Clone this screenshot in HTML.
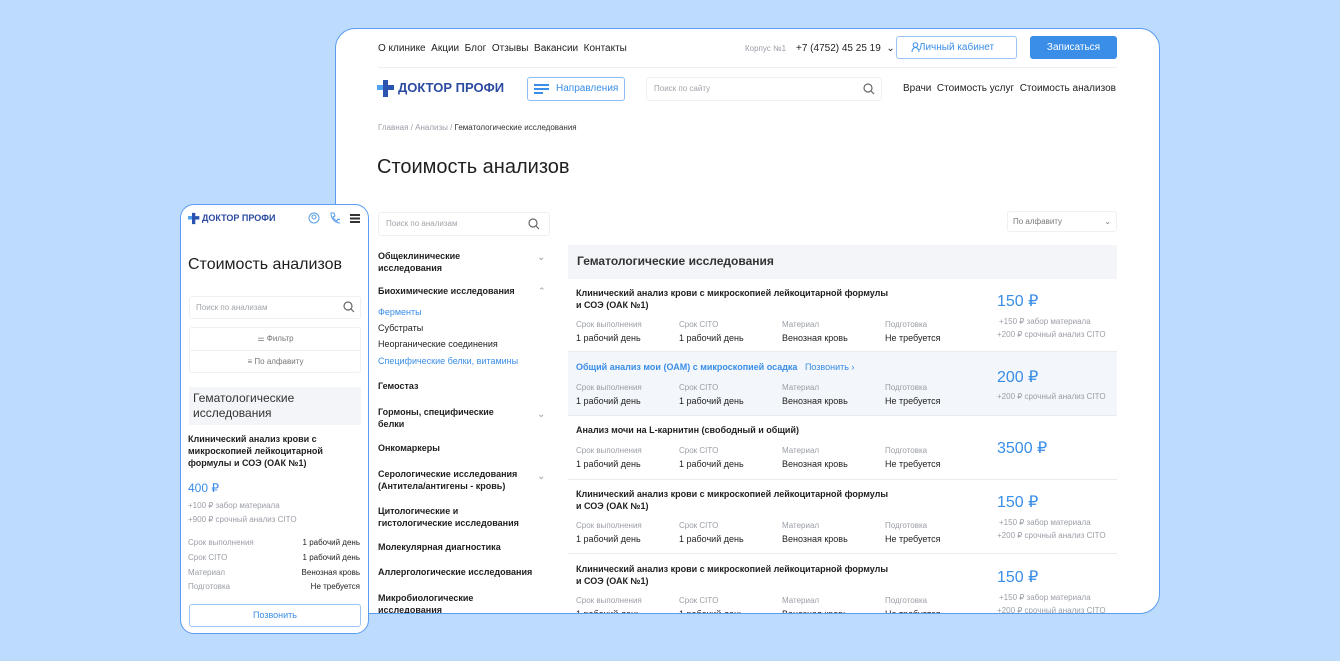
<!DOCTYPE html><html><head><meta charset="utf-8"><style>
*{margin:0;padding:0;box-sizing:border-box}
body{width:1340px;height:661px;background:#bcdbfd;font-family:"Liberation Sans",sans-serif;position:relative;overflow:hidden;color:#1f1f1f}
.a{position:absolute;white-space:nowrap}
.card{position:absolute;left:335px;top:28px;width:825px;height:586px;background:#fff;border:1px solid #5b9cf0;border-radius:20px;overflow:hidden}
.m{position:absolute;left:180px;top:204px;width:189px;height:430px;background:#fff;border:1px solid #5b9cf0;border-radius:14px;overflow:hidden}
.s9{font-size:9px}.s8{font-size:8px}.s10{font-size:10px}
.g{color:#9a9ea6}.b{color:#3a8ee8}
.bold{font-weight:bold}
</style></head><body>
<div class="card">
 <div class="a s10" style="left:42px;top:14px">О клинике&nbsp;&nbsp;Акции&nbsp;&nbsp;Блог&nbsp;&nbsp;Отзывы&nbsp;&nbsp;Вакансии&nbsp;&nbsp;Контакты</div>
 <div class="a s8 g" style="left:409px;top:15px">Корпус №1</div>
 <div class="a s10" style="left:460px;top:14px">+7 (4752) 45 25 19 &nbsp;⌄</div>
 <div class="a" style="left:560px;top:7px;width:121px;height:23px;border:1px solid #9cc4f4;border-radius:3px;color:#3a8ee8;font-size:10px;text-align:center;line-height:21px">Личный кабинет</div>
 <svg class="a" style="left:575px;top:13px" width="9" height="10"><circle cx="4.5" cy="3" r="2.3" fill="none" stroke="#3a8ee8"/><path d="M1 10c0-3 2-4.5 3.5-4.5S8 7 8 10" fill="none" stroke="#3a8ee8"/></svg>
 <div class="a" style="left:694px;top:7px;width:87px;height:23px;background:#3a8ee8;border-radius:3px;color:#fff;font-size:10px;text-align:center;line-height:23px">Записаться</div>
 <div class="a" style="left:42px;top:38px;width:739px;height:1px;background:#eceef1"></div>
 <svg class="a" style="left:41px;top:50px" width="18" height="19" viewBox="0 0 18 19"><path d="M6 1h5v5h6v5h-6v7H6v-7H0V6h6z" fill="#2b53b0"/><path d="M0 6h6v5H0z" fill="#4fa3f0"/></svg>
 <div class="a bold" style="left:62px;top:51px;font-size:13px;color:#2b4aa0">ДОКТОР ПРОФИ</div>
 <div class="a" style="left:191px;top:48px;width:98px;height:24px;border:1px solid #8dbcf2;border-radius:3px;color:#3a8ee8;font-size:10px;line-height:22px;padding-left:28px">Направления</div>
 <div class="a" style="left:198px;top:55px;width:15px;height:1.5px;background:#3a8ee8;box-shadow:0 4px 0 #3a8ee8"></div><div class="a" style="left:198px;top:63px;width:9px;height:1.5px;background:#3a8ee8"></div>
 <div class="a" style="left:310px;top:48px;width:236px;height:24px;border:1px solid #eef0f3;border-radius:3px;font-size:8px;color:#a0a4aa;line-height:22px;padding-left:7px">Поиск по сайту</div>
 <svg class="a" style="left:527px;top:54px" width="12" height="12"><circle cx="5" cy="5" r="4" fill="none" stroke="#666" stroke-width="1.2"/><path d="M8 8l3 3" stroke="#666" stroke-width="1.2"/></svg>
 <div class="a s10" style="left:567px;top:54px">Врачи&nbsp;&nbsp;Стоимость услуг&nbsp;&nbsp;Стоимость анализов</div>
 <div class="a s8 g" style="left:42px;top:94px">Главная / Анализы / <span style="color:#333">Гематологические исследования</span></div>
 <div class="a" style="left:41px;top:127px;font-size:20px">Стоимость анализов</div>
 <div class="a" style="left:42px;top:183px;width:172px;height:24px;border:1px solid #eef0f3;border-radius:3px;font-size:8px;color:#a0a4aa;line-height:22px;padding-left:7px">Поиск по анализам</div>
 <svg class="a" style="left:192px;top:189px" width="12" height="12"><circle cx="5" cy="5" r="4" fill="none" stroke="#666" stroke-width="1.2"/><path d="M8 8l3 3" stroke="#666" stroke-width="1.2"/></svg>
 <div class="a s9 bold" style="left:42px;top:221px;line-height:12px">Общеклинические<br>исследования</div><div class="a s10 g" style="left:201px;top:223px">⌄</div>
 <div class="a s9 bold" style="left:42px;top:257px">Биохимические исследования</div><div class="a s9 g" style="left:202px;top:257px">⌃</div>
 <div class="a s9 b" style="left:42px;top:278px">Ферменты</div>
 <div class="a s9" style="left:42px;top:294px">Субстраты</div>
 <div class="a s9" style="left:42px;top:310px">Неорганические соединения</div>
 <div class="a s9 b" style="left:42px;top:327px">Специфические белки, витамины</div>
 <div class="a s9 bold" style="left:42px;top:352px">Гемостаз</div>
 <div class="a s9 bold" style="left:42px;top:377px;line-height:12px">Гормоны, специфические<br>белки</div><div class="a s10 g" style="left:201px;top:380px">⌄</div>
 <div class="a s9 bold" style="left:42px;top:414px">Онкомаркеры</div>
 <div class="a s9 bold" style="left:42px;top:439px;line-height:12px">Серологические исследования<br>(Антитела/антигены - кровь)</div><div class="a s10 g" style="left:201px;top:442px">⌄</div>
 <div class="a s9 bold" style="left:42px;top:476px;line-height:12px">Цитологические и<br>гистологические исследования</div>
 <div class="a s9 bold" style="left:42px;top:513px">Молекулярная диагностика</div>
 <div class="a s9 bold" style="left:42px;top:538px">Аллергологические исследования</div>
 <div class="a s9 bold" style="left:42px;top:563px;line-height:12px">Микробиологические<br>исследования</div>
 <div class="a" style="left:671px;top:182px;width:110px;height:21px;border:1px solid #eef0f3;border-radius:3px;font-size:8px;color:#777;line-height:19px;padding-left:5px">По алфавиту<span style="position:absolute;right:5px">⌄</span></div>
 <div class="a" style="left:232px;top:216px;width:549px;height:34px;background:#f3f5f8"></div>
 <div class="a" style="left:241px;top:225px;font-size:12px;font-weight:bold;color:#333">Гематологические исследования</div>
 <div class="a" style="left:232px;top:323px;width:549px;height:63px;background:#f3f6fa"></div>
 <div class="a" style="left:232px;top:322px;width:549px;height:1px;background:#e8ebef"></div>
 <div class="a" style="left:232px;top:386px;width:549px;height:1px;background:#e8ebef"></div>
 <div class="a" style="left:232px;top:450px;width:549px;height:1px;background:#e8ebef"></div>
 <div class="a" style="left:232px;top:524px;width:549px;height:1px;background:#e8ebef"></div>
<div style="position:absolute;left:-336px;top:-29px">
 <div class="a s9 bold" style="left:576px;top:287px;line-height:12px">Клинический анализ крови с микроскопией лейкоцитарной формулы<br>и СОЭ (ОАК №1)</div>
 <div class="a s8 g" style="left:576px;top:320px">Срок выполнения</div><div class="a s8 g" style="left:679px;top:320px">Срок CITO</div><div class="a s8 g" style="left:782px;top:320px">Материал</div><div class="a s8 g" style="left:885px;top:320px">Подготовка</div>
 <div class="a s9" style="left:576px;top:333px">1 рабочий день</div><div class="a s9" style="left:679px;top:333px">1 рабочий день</div><div class="a s9" style="left:782px;top:333px">Венозная кровь</div><div class="a s9" style="left:885px;top:333px">Не требуется</div>
 <div class="a b" style="left:997px;top:291px;font-size:16px">150 ₽</div>
 <div class="a s8 g" style="left:999px;top:317px">+150 ₽ забор материала</div><div class="a s8 g" style="left:997px;top:330px">+200 ₽ срочный анализ CITO</div>

 <div class="a s9 bold b" style="left:576px;top:362px">Общий анализ мои (ОАМ) с микроскопией осадка&nbsp;&nbsp;&nbsp;<span style="font-weight:normal">Позвонить ›</span></div>
 <div class="a s8 g" style="left:576px;top:383px">Срок выполнения</div><div class="a s8 g" style="left:679px;top:383px">Срок CITO</div><div class="a s8 g" style="left:782px;top:383px">Материал</div><div class="a s8 g" style="left:885px;top:383px">Подготовка</div>
 <div class="a s9" style="left:576px;top:396px">1 рабочий день</div><div class="a s9" style="left:679px;top:396px">1 рабочий день</div><div class="a s9" style="left:782px;top:396px">Венозная кровь</div><div class="a s9" style="left:885px;top:396px">Не требуется</div>
 <div class="a b" style="left:997px;top:367px;font-size:16px">200 ₽</div>
 <div class="a s8 g" style="left:997px;top:392px">+200 ₽ срочный анализ CITO</div>

 <div class="a s9 bold" style="left:576px;top:425px">Анализ мочи на L-карнитин (свободный и общий)</div>
 <div class="a s8 g" style="left:576px;top:446px">Срок выполнения</div><div class="a s8 g" style="left:679px;top:446px">Срок CITO</div><div class="a s8 g" style="left:782px;top:446px">Материал</div><div class="a s8 g" style="left:885px;top:446px">Подготовка</div>
 <div class="a s9" style="left:576px;top:459px">1 рабочий день</div><div class="a s9" style="left:679px;top:459px">1 рабочий день</div><div class="a s9" style="left:782px;top:459px">Венозная кровь</div><div class="a s9" style="left:885px;top:459px">Не требуется</div>
 <div class="a b" style="left:997px;top:438px;font-size:16px">3500 ₽</div>

 <div class="a s9 bold" style="left:576px;top:488px;line-height:12px">Клинический анализ крови с микроскопией лейкоцитарной формулы<br>и СОЭ (ОАК №1)</div>
 <div class="a s8 g" style="left:576px;top:521px">Срок выполнения</div><div class="a s8 g" style="left:679px;top:521px">Срок CITO</div><div class="a s8 g" style="left:782px;top:521px">Материал</div><div class="a s8 g" style="left:885px;top:521px">Подготовка</div>
 <div class="a s9" style="left:576px;top:534px">1 рабочий день</div><div class="a s9" style="left:679px;top:534px">1 рабочий день</div><div class="a s9" style="left:782px;top:534px">Венозная кровь</div><div class="a s9" style="left:885px;top:534px">Не требуется</div>
 <div class="a b" style="left:997px;top:492px;font-size:16px">150 ₽</div>
 <div class="a s8 g" style="left:999px;top:518px">+150 ₽ забор материала</div><div class="a s8 g" style="left:997px;top:531px">+200 ₽ срочный анализ CITO</div>

 <div class="a s9 bold" style="left:576px;top:563px;line-height:12px">Клинический анализ крови с микроскопией лейкоцитарной формулы<br>и СОЭ (ОАК №1)</div>
 <div class="a s8 g" style="left:576px;top:596px">Срок выполнения</div><div class="a s8 g" style="left:679px;top:596px">Срок CITO</div><div class="a s8 g" style="left:782px;top:596px">Материал</div><div class="a s8 g" style="left:885px;top:596px">Подготовка</div>
 <div class="a s9" style="left:576px;top:609px">1 рабочий день</div><div class="a s9" style="left:679px;top:609px">1 рабочий день</div><div class="a s9" style="left:782px;top:609px">Венозная кровь</div><div class="a s9" style="left:885px;top:609px">Не требуется</div>
 <div class="a b" style="left:997px;top:567px;font-size:16px">150 ₽</div>
 <div class="a s8 g" style="left:999px;top:593px">+150 ₽ забор материала</div><div class="a s8 g" style="left:997px;top:606px">+200 ₽ срочный анализ CITO</div>
</div>
</div>
<div class="m">
 <svg class="a" style="left:7px;top:7px" width="12" height="13" viewBox="0 0 18 19"><path d="M6 1h5v5h6v5h-6v7H6v-7H0V6h6z" fill="#2b53b0"/><path d="M0 6h6v5H0z" fill="#4fa3f0"/></svg>
 <div class="a bold" style="left:21px;top:8px;font-size:9px;color:#2b4aa0">ДОКТОР ПРОФИ</div>
 <svg class="a" style="left:127px;top:7px" width="12" height="12"><circle cx="6" cy="6" r="5" fill="none" stroke="#5a9ee8"/><circle cx="6" cy="5" r="2" fill="none" stroke="#5a9ee8"/></svg>
 <svg class="a" style="left:148px;top:7px" width="11" height="12"><path d="M2 1l3 0 1 3-2 1c1 2 2 3 4 4l1-2 3 1v3c-6 0-10-4-10-10z" fill="none" stroke="#5a9ee8"/></svg>
 <div class="a" style="left:169px;top:9px;width:10px;height:1.5px;background:#333;box-shadow:0 3.5px 0 #333,0 7px 0 #333"></div>
 <div class="a" style="left:7px;top:51px;font-size:16px">Стоимость анализов</div>
 <div class="a" style="left:8px;top:91px;width:172px;height:23px;border:1px solid #eef0f3;border-radius:3px;font-size:8px;color:#a0a4aa;line-height:21px;padding-left:6px">Поиск по анализам</div>
 <svg class="a" style="left:162px;top:96px" width="12" height="12"><circle cx="5" cy="5" r="4" fill="none" stroke="#666" stroke-width="1.2"/><path d="M8 8l3 3" stroke="#666" stroke-width="1.2"/></svg>
 <div class="a" style="left:8px;top:122px;width:172px;height:46px;border:1px solid #eef0f3;border-radius:3px"></div>
 <div class="a" style="left:8px;top:145px;width:172px;height:1px;background:#eef0f3"></div>
 <div class="a s8" style="left:0;width:189px;text-align:center;top:129px;color:#777">⚌ Фильтр</div>
 <div class="a s8" style="left:0;width:189px;text-align:center;top:152px;color:#777">≡ По алфавиту</div>
 <div class="a" style="left:8px;top:182px;width:172px;height:38px;background:#f3f5f8"></div>
 <div class="a" style="left:12px;top:186px;font-size:12px;line-height:15px;color:#333">Гематологические<br>исследования</div>
 <div class="a s9 bold" style="left:7px;top:228px;line-height:12px">Клинический анализ крови с<br>микроскопией лейкоцитарной<br>формулы и СОЭ (ОАК №1)</div>
 <div class="a b" style="left:7px;top:276px;font-size:12px">400 ₽</div>
 <div class="a s8 g" style="left:7px;top:296px">+100 ₽ забор материала</div>
 <div class="a s8 g" style="left:7px;top:310px">+900 ₽ срочный анализ CITO</div>
 <div class="a s8 g" style="left:7px;top:333px">Срок выполнения</div><div class="a s8" style="right:8px;top:333px">1 рабочий день</div>
 <div class="a s8 g" style="left:7px;top:348px">Срок CITO</div><div class="a s8" style="right:8px;top:348px">1 рабочий день</div>
 <div class="a s8 g" style="left:7px;top:363px">Материал</div><div class="a s8" style="right:8px;top:363px">Венозная кровь</div>
 <div class="a s8 g" style="left:7px;top:377px">Подготовка</div><div class="a s8" style="right:8px;top:377px">Не требуется</div>
 <div class="a" style="left:8px;top:399px;width:172px;height:23px;border:1px solid #9cc4f4;border-radius:3px;color:#3a8ee8;font-size:9px;text-align:center;line-height:21px">Позвонить</div>
</div>
</body></html>
